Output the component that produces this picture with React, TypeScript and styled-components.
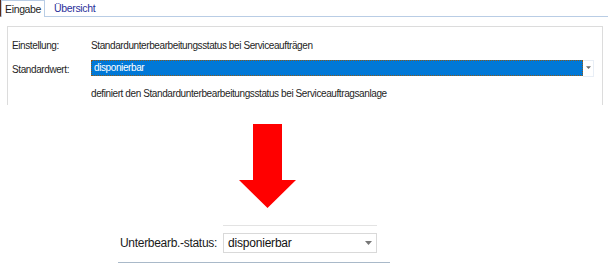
import React from 'react';
import styled, { createGlobalStyle } from 'styled-components';

const GlobalStyle = createGlobalStyle`
  html, body {
    margin: 0;
    padding: 0;
    background: #ffffff;
  }
  body {
    font-family: "Liberation Sans", Arial, sans-serif;
    color: #000000;
  }
`;

const Page = styled.div`
  width: 608px;
  height: 263px;
  overflow: hidden;
  display: flex;
  flex-direction: column;
`;

const TabBar = styled.div`
  display: flex;
  align-items: flex-end;
  height: 17px;
  border-bottom: 1px solid #b9cde5;
  border-left: 1px solid #5a2a1a;
`;

const Tab = styled.div<{ $active?: boolean }>`
  height: ${(p) => (p.$active ? '17px' : '15px')};
  box-sizing: border-box;
  padding: 0 ${(p) => (p.$active ? '3px' : '9px')};
  font-size: 10.5px;
  letter-spacing: -0.35px;
  line-height: ${(p) => (p.$active ? '16px' : '14px')};
  color: ${(p) => (p.$active ? '#1e1e1e' : '#2b2f9a')};
  background: #ffffff;
  border: ${(p) => (p.$active ? '1px solid #b9cde5' : 'none')};
  border-bottom: none;
  margin-bottom: ${(p) => (p.$active ? '-1px' : '0')};
  position: relative;
`;

const Panel = styled.div`
  margin: 9px 5px 0 7px;
  height: 77px;
  border: 1px solid #dcdcdc;
  border-bottom: none;
  padding: 11px 0 0 4px;
  display: grid;
  grid-template-columns: 79px 1fr;
  grid-template-rows: 15px 16px 15px;
  row-gap: 7px;
  align-items: center;
  font-size: 10px;
  letter-spacing: -0.4px;
  color: #1e1e1e;
  white-space: nowrap;
`;

const RowLabel = styled.span<{ $shift?: number }>`
  padding-top: ${(p) => p.$shift ?? 0}px;
`;

const Hint = styled.div`
  grid-column: 2;
  margin-top: 5px;
`;

const SelectWrap = styled.div`
  display: flex;
  align-items: center;
  margin-right: 8px;
`;

const SelectedValue = styled.div`
  flex: 1;
  height: 16px;
  box-sizing: border-box;
  background: #0078d7;
  color: #ffffff;
  border: 1px dotted #8a5a1a;
  padding-left: 2px;
  line-height: 13px;
`;

const SmallDrop = styled.div`
  width: 11px;
  height: 17px;
  box-sizing: border-box;
  border: 1px solid #e8eef6;
  border-left: none;
  display: flex;
  align-items: center;
  justify-content: center;
`;

const ArrowBox = styled.div`
  margin-top: 19px;
  padding-left: 239px;
  height: 84px;
`;

const Form = styled.div`
  margin: 17px 0 0 118px;
  width: 272px;
  display: flex;
  flex-direction: column;
`;

const TopRule = styled.div`
  margin-left: 105px;
  width: 154px;
  height: 1px;
  background: #e3e3e3;
`;

const FieldRow = styled.div`
  display: flex;
  align-items: center;
  margin-top: 7px;
  height: 20px;
`;

const FieldLabel = styled.div`
  width: 105px;
  padding-left: 2px;
  box-sizing: border-box;
  font-size: 12px;
  letter-spacing: -0.3px;
  white-space: nowrap;
  color: #1a1a1a;
`;

const Combo = styled.div`
  width: 154px;
  height: 20px;
  box-sizing: border-box;
  border: 1px solid #d9d9d9;
  display: flex;
  align-items: center;
  justify-content: space-between;
  padding: 0 4px 0 4px;
  font-size: 12px;
  letter-spacing: -0.2px;
  color: #111111;
`;

const BottomRule = styled.div`
  margin-top: 9px;
  height: 1px;
  background: #a9b9c9;
`;

const Caret = ({ color, w }: { color: string; w: number }) => (
  <svg width={w} height={w / 2 + 1} viewBox="0 0 8 5">
    <path d="M0 0 H8 L4 4.5 Z" fill={color} />
  </svg>
);

export default function App() {
  return (
    <Page>
      <GlobalStyle />
      <TabBar>
        <Tab $active>Eingabe</Tab>
        <Tab>Übersicht</Tab>
      </TabBar>
      <Panel>
        <RowLabel>Einstellung:</RowLabel>
        <span>Standardunterbearbeitungsstatus bei Serviceaufträgen</span>
        <RowLabel $shift={3}>Standardwert:</RowLabel>
        <SelectWrap>
          <SelectedValue>disponierbar</SelectedValue>
          <SmallDrop>
            <Caret color="#6a6a6a" w={5} />
          </SmallDrop>
        </SelectWrap>
        <Hint>definiert den Standardunterbearbeitungsstatus bei Serviceauftragsanlage</Hint>
      </Panel>
      <ArrowBox>
        <svg width="57" height="84" viewBox="0 0 57 84">
          <path d="M14 0 H43 V56 H57 L28.5 84 L0 56 H14 Z" fill="#ff0000" />
        </svg>
      </ArrowBox>
      <Form>
        <TopRule />
        <FieldRow>
          <FieldLabel>Unterbearb.-status:</FieldLabel>
          <Combo>
            <span>disponierbar</span>
            <Caret color="#777777" w={7} />
          </Combo>
        </FieldRow>
        <BottomRule />
      </Form>
    </Page>
  );
}
